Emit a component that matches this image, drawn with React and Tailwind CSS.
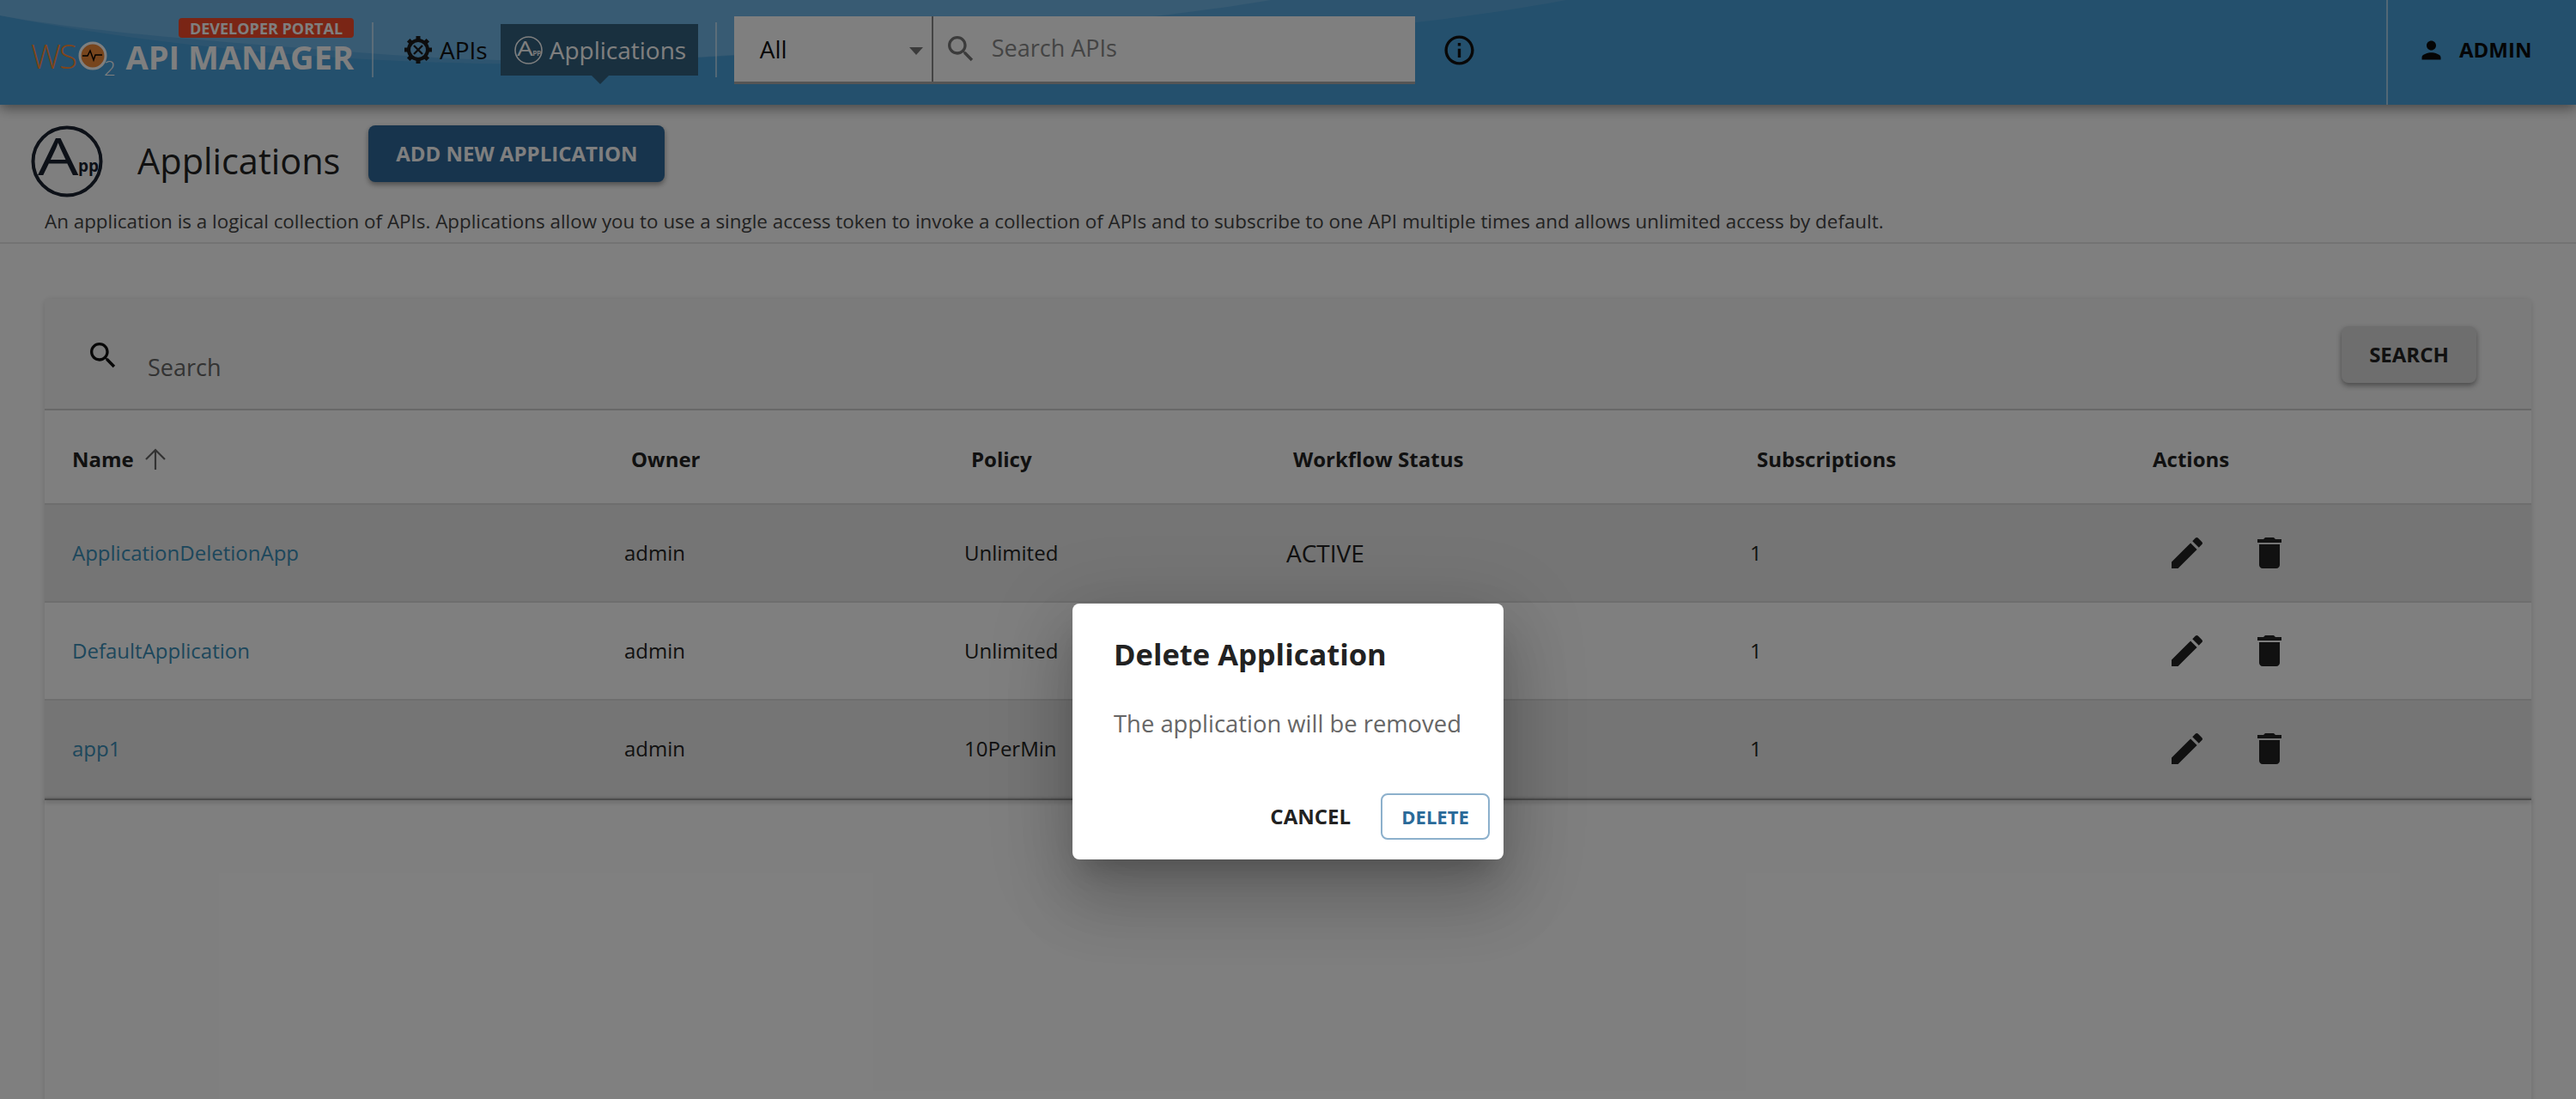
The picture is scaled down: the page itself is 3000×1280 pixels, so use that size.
import * as React from 'react';

const Icon = ({ d, size = 48, className = '' }) => (
  <svg width={size} height={size} viewBox="0 0 24 24" fill="currentColor" className={'shrink-0 ' + className}>
    <path d={d} />
  </svg>
);

const SEARCH =
  'M15.5 14h-.79l-.28-.27C15.41 12.59 16 11.11 16 9.5 16 5.91 13.09 3 9.5 3S3 5.91 3 9.5 5.91 16 9.5 16c1.61 0 3.09-.59 4.23-1.57l.27.28v.79l5 4.99L20.49 19l-4.99-5zm-6 0C7.01 14 5 11.99 5 9.5S7.01 5 9.5 5 14 7.01 14 9.5 11.99 14 9.5 14z';
const EDIT =
  'M3 17.25V21h3.75L17.81 9.94l-3.75-3.75L3 17.25zM20.71 7.04c.39-.39.39-1.02 0-1.41l-2.34-2.34c-.39-.39-1.02-.39-1.41 0l-1.83 1.83 3.75 3.75 1.83-1.83z';
const TRASH = 'M6 19c0 1.1.9 2 2 2h8c1.1 0 2-.9 2-2V7H6v12zM19 4h-3.5l-1-1h-5l-1 1H5v2h14V4z';
const PERSON =
  'M12 12c2.21 0 4-1.79 4-4s-1.79-4-4-4-4 1.79-4 4 1.79 4 4 4zm0 2c-2.67 0-8 1.34-8 4v2h16v-2c0-2.66-5.33-4-8-4z';
const INFO =
  'M11 7h2v2h-2zm0 4h2v6h-2zm1-9C6.48 2 2 6.48 2 12s4.48 10 10 10 10-4.48 10-10S17.52 2 12 2zm0 18c-4.41 0-8-3.59-8-8s3.59-8 8-8 8 3.59 8 8-3.59 8-8 8z';

const AppIcon = ({ size, className = '' }) => (
  <svg width={size} height={size} viewBox="0 0 84 84" fill="none" className={'shrink-0 ' + className}>
    <circle cx="42" cy="42" r="39.5" stroke="currentColor" strokeWidth="4" />
    <text transform="translate(8 58) scale(1.25 1)" fontSize="60" fontWeight="400" fontFamily="'Open Sans', sans-serif" fill="currentColor">
      A
    </text>
    <text x="55" y="54" fontSize="19" fontWeight="700" fontFamily="'Open Sans', sans-serif" fill="currentColor">
      pp
    </text>
  </svg>
);

const WsoLogo = () => (
  <svg width="100" height="46" viewBox="0 0 100 46" className="shrink-0 self-start">
    <text x="0" y="36" fontSize="39" fontWeight="300" fontFamily="'Open Sans', sans-serif" letterSpacing="-2" fill="#ff8a33">
      WS
    </text>
    <circle cx="72" cy="21" r="15" fill="#ef8a3a" stroke="#fff" strokeWidth="3" />
    <path d="M60 21h6l3-6 4 11 2-6h8" fill="none" stroke="#000" strokeWidth="1.4" />
    <text x="85" y="44" fontSize="24" fontWeight="300" fontFamily="'Open Sans', sans-serif" fill="#fff">
      2
    </text>
  </svg>
);

const GearIcon = () => (
  <svg width="32" height="32" viewBox="0 0 32 32" fill="none" className="shrink-0 text-[#1a1a1a]">
    {[0, 45, 90, 135, 180, 225, 270, 315].map(a => (
      <rect key={a} x="13.5" y="0" width="5" height="6" fill="currentColor" transform={`rotate(${a} 16 16)`} />
    ))}
    <circle cx="16" cy="16" r="11" stroke="currentColor" strokeWidth="4" />
    <path d="M11 11l10 10M21 11L11 21" stroke="currentColor" strokeWidth="2.4" />
  </svg>
);

const rows = [
  { name: 'ApplicationDeletionApp', policy: 'Unlimited', status: 'ACTIVE', bg: 'bg-[#eaeaea]' },
  { name: 'DefaultApplication', policy: 'Unlimited', status: 'ACTIVE', bg: 'bg-white' },
  { name: 'app1', policy: '10PerMin', status: 'ACTIVE', bg: 'bg-[#eaeaea]' },
];

const gridCols = 'grid grid-cols-[667px_396px_375px_540px_461px_1fr]';

const App = () => {
  return (
    <div className="relative h-[1280px] w-[3000px] overflow-hidden bg-white font-['Open_Sans',sans-serif] text-[#222]">
      {/* top bar */}
      <header className="relative z-10 flex h-[122px] items-center bg-[#48a0da] pb-[6px] shadow-[0_4px_14px_rgba(0,0,0,0.45)]">
        <svg width="3000" height="122" viewBox="0 0 3000 122" className="absolute left-0 top-0">
          <path d="M0 0H1824C1500 60 1250 40 1100 50 900 62 700 76 560 74 360 70 160 50 0 18Z" fill="#5ba9de" />
          <path d="M0 0H1480C1340 24 1100 44 880 62 700 76 560 72 430 62 280 50 120 40 0 18Z" fill="#70b6e6" />
        </svg>

        <div className="relative ml-[36px] mt-[21px] flex h-[70px] w-[376px] flex-col items-end self-start">
          <span className="flex h-[23px] w-[204px] items-center justify-center rounded-[4px] bg-[#f44a2a] text-[18px] leading-none font-bold text-white">
            DEVELOPER PORTAL
          </span>
          <div className="flex w-full items-start justify-between">
            <WsoLogo />
            <span className="text-[38px] leading-[44px] font-bold text-white">API MANAGER</span>
          </div>
        </div>
        <div className="relative ml-[21px] h-[64px] w-[2px] bg-white/50" />

        <nav className="relative ml-[36px] flex h-[60px] items-center">
          <div className="flex items-center gap-[9px] text-[28px] text-[#111]">
            <GearIcon />
            APIs
          </div>
          <div className="relative ml-[15px] flex h-[60px] w-[230px] items-center gap-[8px] bg-[#33617f] pl-[16px] text-[28px] text-white">
            <AppIcon size={33} />
            Applications
            <span className="absolute left-[106px] top-[60px] h-0 w-0 border-x-[10px] border-t-[10px] border-x-transparent border-t-[#33617f]" />
          </div>
        </nav>
        <div className="relative ml-[20px] h-[64px] w-[2px] bg-white/50" />

        <div className="relative ml-[20px] flex h-[79px] w-[793px] border-b-[3px] border-[#aaa] bg-white">
          <div className="relative flex w-[232px] items-center border-r-2 border-[#888] pl-[30px] text-[28px] text-[#111]">
            All
            <span className="absolute right-[10px] top-[36px] h-0 w-0 border-x-[8px] border-t-[9px] border-x-transparent border-t-[#777]" />
          </div>
          <div className="flex flex-1 items-center pl-[12px] text-[#888]">
            <Icon d={SEARCH} size={40} className="text-[#777]" />
            <span className="ml-[16px] text-[27px]">Search APIs</span>
          </div>
        </div>
        <Icon d={INFO} size={41} className="relative ml-[31px] text-[#111]" />

        <div className="relative ml-auto -mb-[6px] flex h-[122px] w-[221px] items-center border-l-2 border-white/50 pb-[6px] pl-[34px]">
          <Icon d={PERSON} size={33} className="text-[#0a0a0a]" />
          <span className="ml-[16px] text-[24px] font-bold text-[#0a0a0a]">ADMIN</span>
        </div>
      </header>

      {/* title row */}
      <div className="h-[162px] border-b-2 border-[#e6e6e6] pl-[36px] pt-[24px]">
        <div className="flex items-start">
          <AppIcon size={84} className="text-[#1a2230]" />
          <h1 className="ml-[40px] mt-[12px] text-[41.5px] leading-[58px] font-normal text-[#222]">Applications</h1>
          <button className="ml-[33px] flex h-[66px] w-[345px] items-center justify-center rounded-[8px] bg-[#2e689a] text-[24px] font-bold text-white shadow-[0_3px_6px_rgba(0,0,0,0.4)]">
            ADD NEW APPLICATION
          </button>
        </div>
        <p className="ml-[16px] mt-[13px] text-[22.4px] leading-[30px] text-[#444]">
          An application is a logical collection of APIs. Applications allow you to use a single access token to invoke a collection of APIs and to subscribe to one API multiple times and allows unlimited access by default.
        </p>
      </div>

      {/* table card */}
      <div className="ml-[52px] mt-[64px] h-[1000px] w-[2896px] rounded-t-[6px] bg-white shadow-[0_1px_6px_rgba(0,0,0,0.15)]">
        <div className="flex h-[130px] border-b-2 border-[#d0d0d0] bg-[#f6f6f6]">
          <Icon d={SEARCH} size={40} className="ml-[48px] mt-[46px] text-[#111]" />
          <span className="ml-[32px] mt-[60px] text-[27px] leading-[40px] text-[#666]">Search</span>
          <button className="ml-auto mr-[64px] mt-[32px] h-[66px] w-[157px] rounded-[8px] bg-[#dcdcdc] text-[24px] font-bold text-[#222] shadow-[0_3px_6px_rgba(0,0,0,0.4)]">
            SEARCH
          </button>
        </div>

        <div className="relative">
          <div className={gridCols + ' h-[110px] items-center border-b-2 border-[#ddd] pt-[5px] text-[24px] font-bold text-[#222]'}>
            <div className="flex items-center gap-[12px] pl-[32px]">
              Name
              <svg width="26" height="26" viewBox="0 0 26 26" fill="none" stroke="#666" strokeWidth="2.2" className="shrink-0">
                <path d="M13 25V2M2 13L13 2l11 11" />
              </svg>
            </div>
            <div className="pl-[16px]">Owner</div>
            <div className="pl-[16px]">Policy</div>
            <div className="pl-[16px]">Workflow Status</div>
            <div className="pl-[16px]">Subscriptions</div>
            <div className="pl-[16px]">Actions</div>
          </div>

          {rows.map(r => (
            <div key={r.name} className={gridCols + ' h-[114px] items-center border-b-2 border-[#ddd] text-[24px] text-[#222] ' + r.bg}>
              <div className="pl-[32px] text-[#3a8fb8]">{r.name}</div>
              <div className="pl-[8px]">admin</div>
              <div className="pl-[8px]">{r.policy}</div>
              <div className="pl-[8px] text-[28px]">{r.status}</div>
              <div className="pl-[8px]">1</div>
              <div className="flex gap-[48px] pl-[32px] text-[#222]">
                <Icon d={EDIT} />
                <Icon d={TRASH} />
              </div>
            </div>
          ))}
          <div className="h-[2px] bg-[#999] shadow-[0_2px_5px_rgba(0,0,0,0.35)]" />
        </div>
      </div>

      {/* dialog */}
      <div className="absolute inset-0 z-20 flex justify-center bg-black/50 pt-[703px]">
        <div className="relative flex h-[298px] w-[502px] flex-col rounded-[8px] bg-white pl-[48px] shadow-[0_22px_30px_-14px_rgba(0,0,0,0.2),0_48px_76px_6px_rgba(0,0,0,0.14),0_18px_92px_16px_rgba(0,0,0,0.12)]">
          <h2 className="mt-[37px] text-[34.5px] leading-[44px] font-bold text-[#222]">Delete Application</h2>
          <p className="mt-[39px] text-[27.4px] leading-[40px] text-[#666]">The application will be removed</p>
          <div className="mt-auto mb-[23px] mr-[16px] flex items-center justify-end gap-[35px]">
            <button className="text-[24px] font-bold text-[#222]">CANCEL</button>
            <button className="h-[54px] w-[127px] rounded-[8px] border-2 border-[#8cb0cc] text-[22px] font-bold text-[#2a6a99]">DELETE</button>
          </div>
        </div>
      </div>
    </div>
  );
};

export default App;
